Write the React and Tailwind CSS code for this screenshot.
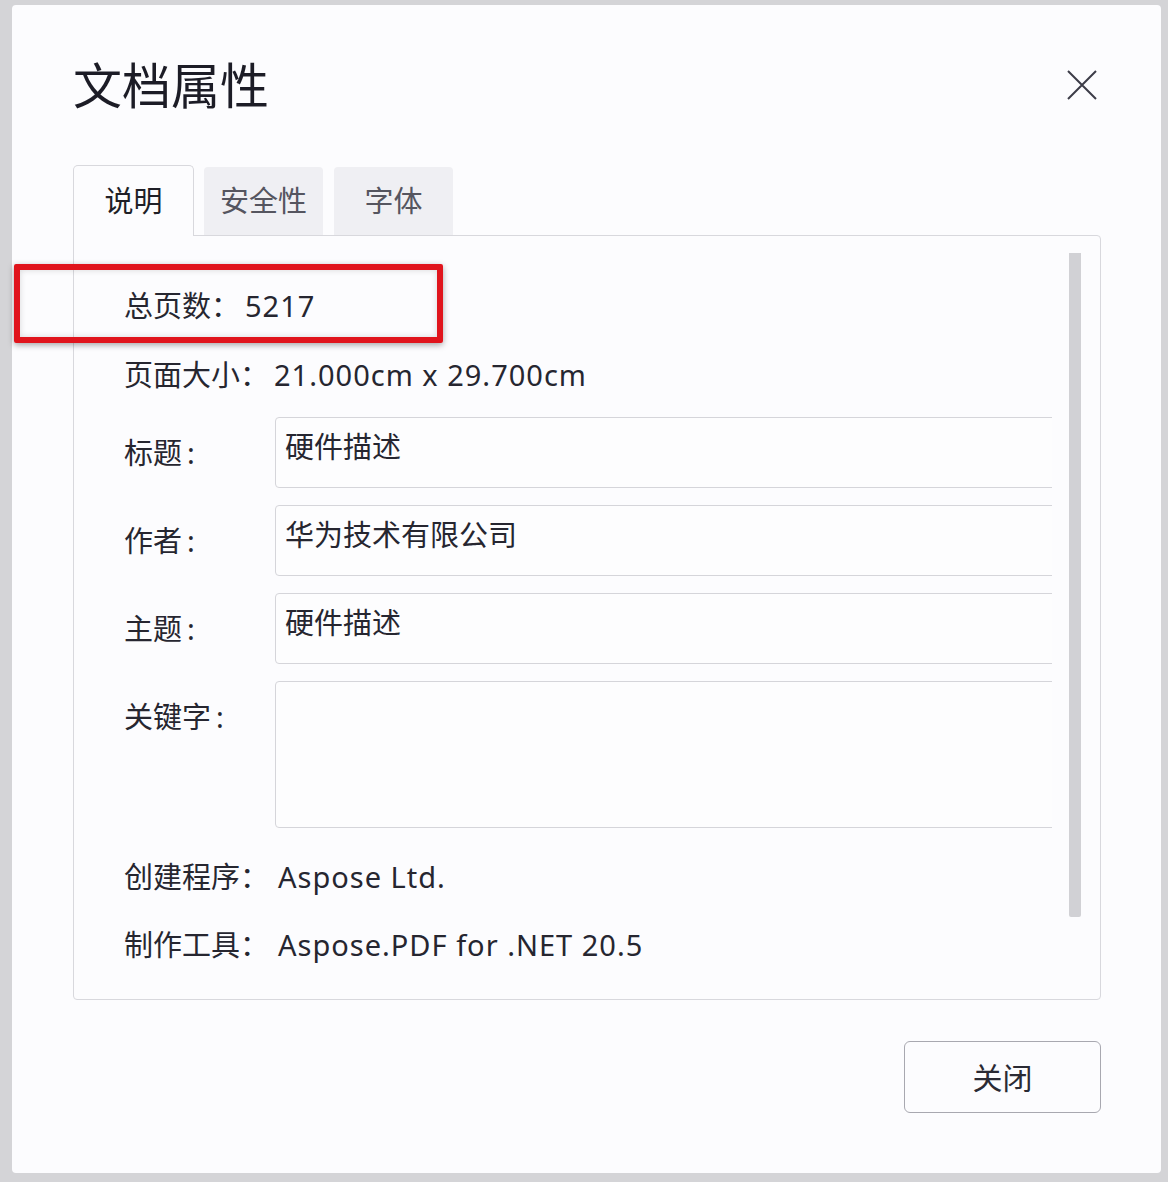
import React from 'react';

const font = { fontFamily: '"Noto Sans", "Noto Sans CJK SC", sans-serif' };

const TextRow = ({ label, value, className = '' }) => (
  <div className={`flex h-[40px] items-center ${className}`}>
    <span>{label}</span>
    <span className="ml-[5px] tracking-[1px]">{value}</span>
  </div>
);

const FieldRow = ({ label, value, tall, className = '' }) => (
  <div className={`flex ${className}`}>
    <div className="w-[151px] shrink-0 pt-[16px]">
      <div className="h-[40px] leading-[40px]">
        {label}
        <span className="ml-[5px]">:</span>
      </div>
    </div>
    <div
      className={`w-[820px] shrink-0 rounded-[4px] border border-[#d5d5da] bg-[#fdfdfe] pl-[9px] pt-[9px] ${
        tall ? 'h-[147px]' : 'h-[71px]'
      }`}
    >
      <div className="h-[40px] leading-[40px]">{value}</div>
    </div>
  </div>
);

export default function App() {
  return (
    <div
      className="relative min-h-[1182px] bg-[#d4d4d7] pl-[12px] pt-[5px] pb-[9px] pr-[7px]"
      style={font}
    >
      <div className="h-[1168px] w-[1149px] rounded-[4px] bg-[#fcfcfe] text-[29px] text-[#262630]">
        {/* header */}
        <div className="flex h-[160px] items-center justify-between pl-[61px] pr-[64px]">
          <h1 className="text-[49px] leading-none text-[#1c1c26]">文档属性</h1>
          <button aria-label="关闭" className="flex h-[30px] w-[30px] items-center justify-center">
            <svg width="30" height="30" viewBox="0 0 30 30" fill="none">
              <path d="M1 1L29 29M29 1L1 29" stroke="#3c3c48" strokeWidth="2" />
            </svg>
          </button>
        </div>

        {/* tabs */}
        <div className="flex items-end gap-[10px] pl-[61px]">
          <div className="relative z-10 -mb-px flex h-[71px] w-[121px] items-center justify-center rounded-t-[5px] border-x border-t border-[#d8d8dd] bg-[#fcfcfe] text-[#1f1f27]">
            说明
          </div>
          <div className="flex h-[68px] w-[119px] items-center justify-center rounded-t-[4px] bg-[#efeff3] text-[#55555f]">
            安全性
          </div>
          <div className="ml-px flex h-[68px] w-[119px] items-center justify-center rounded-t-[4px] bg-[#efeff3] text-[#55555f]">
            字体
          </div>
        </div>

        {/* panel */}
        <div className="ml-[61px] flex h-[765px] w-[1028px] rounded-b-[4px] rounded-tr-[4px] border border-[#d8d8dd]">
          <div className="w-[978px] shrink-0 overflow-hidden pl-[50px] pt-[50px]">
            <TextRow label="总页数：" value="5217" />
            <TextRow label="页面大小：" value="21.000cm x 29.700cm" className="mt-[29px]" />
            <FieldRow label="标题" value="硬件描述" className="mt-[22px]" />
            <FieldRow label="作者" value="华为技术有限公司" className="mt-[17px]" />
            <FieldRow label="主题" value="硬件描述" className="mt-[17px]" />
            <FieldRow label="关键字" value="" tall className="mt-[17px]" />
            <div className="mt-[29px] flex h-[40px] items-center">
              <span className="w-[154px] shrink-0">创建程序：</span>
              <span className="tracking-[1px]">Aspose Ltd.</span>
            </div>
            <div className="mt-[28px] flex h-[40px] items-center">
              <span className="w-[154px] shrink-0">制作工具：</span>
              <span className="tracking-[1px]">Aspose.PDF for .NET 20.5</span>
            </div>
          </div>
          <div className="flex-1 pl-[17px] pt-[17px]">
            <div className="h-[664px] w-[12px] rounded-b-[2px] bg-[#d1d1d5]" />
          </div>
        </div>

        {/* footer */}
        <div className="flex w-[1089px] justify-end pt-[41px]">
          <button className="h-[72px] w-[197px] rounded-[6px] border border-[#a8a8b0] bg-[#fcfcfe] text-[30px] text-[#2a2a34]">
            关闭
          </button>
        </div>
      </div>

      {/* red annotation box */}
      <div className="pointer-events-none absolute left-[14px] top-[264px] h-[79px] w-[429px] rounded-[2px] border-[6px] border-[#e0141c] shadow-[0_2px_6px_rgba(0,0,0,0.35),inset_0_0_6px_rgba(0,0,0,0.15)]" />
    </div>
  );
}
